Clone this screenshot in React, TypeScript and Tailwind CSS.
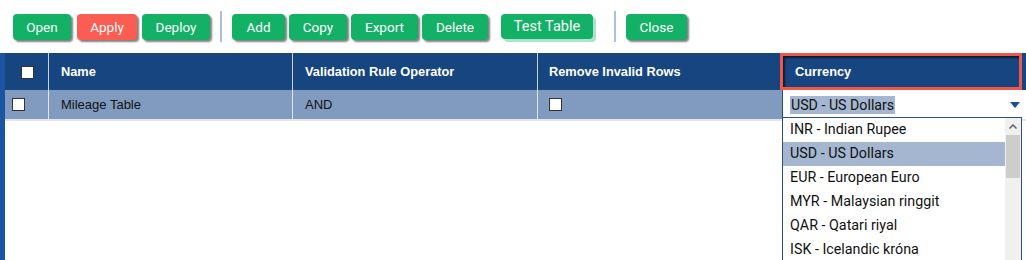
import React from 'react';

const ToolButton: React.FC<{ label: string; width: string; red?: boolean }> = ({ label, width, red }) => (
  <button
    className={`${width} h-[26px] rounded-[4px] text-[13.5px] text-white shadow-[2px_2px_2px_rgba(0,0,0,0.5)] ${
      red ? 'bg-[#fb5d52]' : 'bg-[#12b166]'
    }`}
    style={{ fontFamily: 'Roboto, sans-serif' }}
  >
    {label}
  </button>
);

const Check: React.FC<{ className?: string }> = ({ className }) => (
  <span className={`block w-[13px] h-[13px] bg-white border border-[#333] ${className ?? ''}`} />
);

const currencies = [
  'INR - Indian Rupee',
  'USD - US Dollars',
  'EUR - European Euro',
  'MYR - Malaysian ringgit',
  'QAR - Qatari riyal',
  'ISK - Icelandic króna',
];

const App: React.FC = () => {
  return (
    <div className="relative w-[1026px] h-[260px] bg-white overflow-hidden">
      {/* toolbar */}
      <div className="h-[53px] flex items-start pt-[14px] pl-[13px]">
        <div className="flex">
          <ToolButton label="Open" width="w-[58px]" />
          <div className="w-[6px]" />
          <ToolButton label="Apply" width="w-[60px]" red />
          <div className="w-[5px]" />
          <ToolButton label="Deploy" width="w-[68px]" />
        </div>
        <div className="w-[2px] h-[31px] bg-[#aac0e0] mt-[-3px] ml-[10px] mr-[10px]" />
        <div className="flex gap-[4px]">
          <ToolButton label="Add" width="w-[53px]" />
          <ToolButton label="Copy" width="w-[58px]" />
          <ToolButton label="Export" width="w-[67px]" />
          <ToolButton label="Delete" width="w-[66px]" />
        </div>
        <button
          className="ml-[13px] w-[92px] h-[25px] rounded-[4px] bg-[#12b166] text-white text-[14.5px] shadow-[3px_3px_0_rgba(18,177,102,0.35)]"
          style={{ fontFamily: 'Roboto, sans-serif' }}
        >
          Test Table
        </button>
        <div className="w-[2px] h-[31px] bg-[#aac0e0] mt-[-3px] ml-[21px] mr-[10px]" />
        <ToolButton label="Close" width="w-[61px]" />
      </div>

      {/* grid */}
      <div className="h-[207px] border-l-[5px] border-[#1a55a1]" style={{ fontFamily: '"Liberation Sans", Arial, sans-serif' }}>
        <div className="flex h-[37px] bg-[#174580] text-white text-[12.8px] font-bold">
          <div className="w-[44px] flex items-center justify-center border-r border-[#c9d3e0]">
            <Check className="mt-[1px] ml-[1px]" />
          </div>
          <div className="w-[244px] flex items-center pl-[12px] border-r border-[#c9d3e0]">Name</div>
          <div className="w-[245px] flex items-center pl-[12px] border-r border-[#c9d3e0]">Validation Rule Operator</div>
          <div className="w-[242px] flex items-center pl-[11px]">Remove Invalid Rows</div>
          <div className="w-[242px] flex items-center pl-[12px] border-[3px] border-[#f2564a] shadow-[inset_2px_2px_2px_rgba(0,0,0,0.6)]">
            Currency
          </div>
        </div>
        <div className="flex h-[31px] bg-[#809bbf] text-[13px] text-[#111] border-b-2 border-[#e3e6ea]">
          <div className="w-[44px] flex items-start pt-[8px] pl-[7px] border-r border-[#dfe5ee]">
            <Check />
          </div>
          <div className="w-[244px] flex items-center pl-[12px] border-r border-[#dfe5ee]">Mileage Table</div>
          <div className="w-[245px] flex items-center pl-[12px] border-r border-[#dfe5ee]">AND</div>
          <div className="w-[244px] flex items-start pt-[8px] pl-[11px]">
            <Check />
          </div>
          <div className="flex-1 h-[29px] bg-white border-l border-[#2b4f80] flex items-center justify-between pl-[7px] pr-[6px]">
            <span className="text-[14.2px] text-[#111] bg-[#a4b6d0] px-[1px] leading-[18px]" style={{ fontFamily: 'Roboto, sans-serif' }}>
              USD - US Dollars
            </span>
            <svg width="10" height="6" viewBox="0 0 10 6">
              <path d="M0 0 L10 0 L5 6 Z" fill="#1c4f8f" />
            </svg>
          </div>
        </div>
      </div>

      {/* open dropdown */}
      <div
        className="absolute left-[782px] top-[117px] w-[240px] h-[150px] bg-white border border-[#2b4f80] flex"
        style={{ fontFamily: 'Roboto, sans-serif' }}
      >
        <ul className="flex-1">
          {currencies.map((c, i) => (
            <li
              key={c}
              className={`h-[24px] flex items-center pl-[7px] text-[14.3px] text-[#111] ${i === 1 ? 'bg-[#a4b6d0]' : ''}`}
            >
              {c}
            </li>
          ))}
        </ul>
        <div className="w-[16px] bg-[#f0f0f0] flex flex-col">
          <div className="h-[17px] flex items-center justify-center">
            <svg width="8" height="5" viewBox="0 0 8 5">
              <path d="M0.5 4.5 L4 1 L7.5 4.5" fill="none" stroke="#606060" strokeWidth="1.5" />
            </svg>
          </div>
          <div className="h-[43px] mx-[1px] bg-[#cdcdcd]" />
        </div>
      </div>
    </div>
  );
};

export default App;
